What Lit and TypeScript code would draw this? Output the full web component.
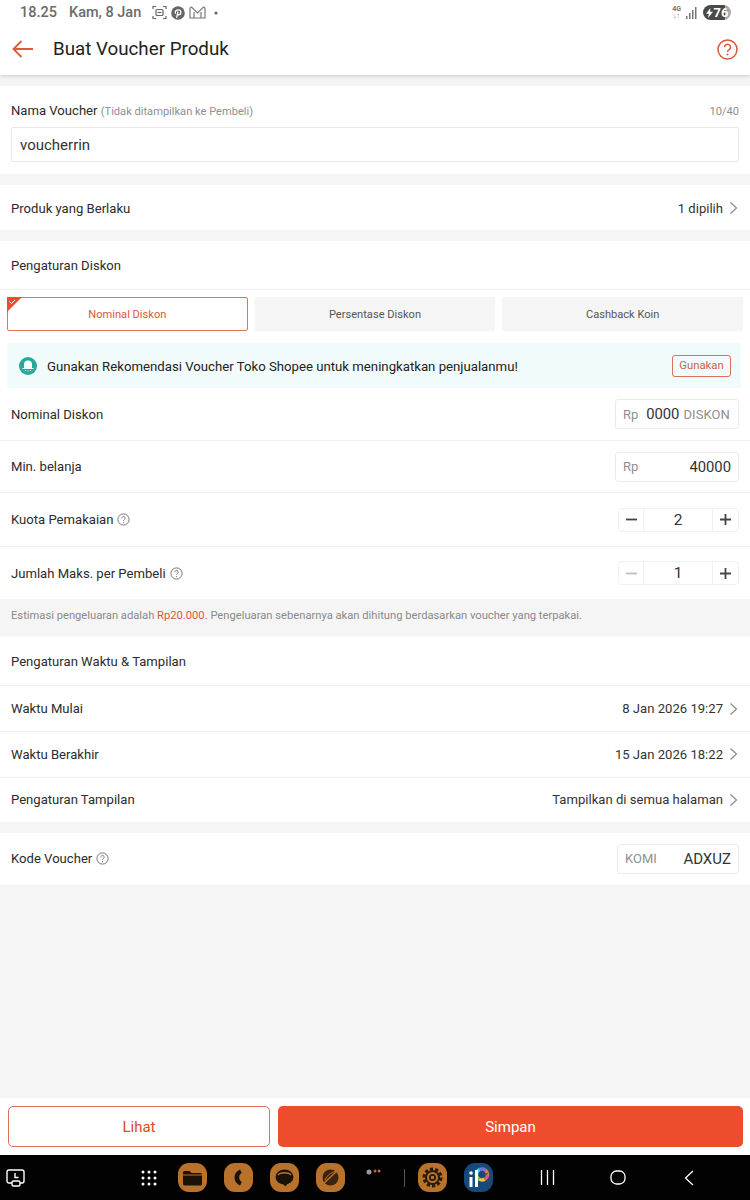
import { LitElement, html, css, svg } from 'lit';
import { customElement } from 'lit/decorators.js';

const chevron = html`<svg class="chev" width="9" height="14" viewBox="0 0 9 14"><path d="M1.5 1.5 7.5 7l-6 5.5" fill="none" stroke="#8a8a8a" stroke-width="1.2"/></svg>`;

const help = html`<svg class="help" width="13" height="13" viewBox="0 0 13 13">
  <circle cx="6.5" cy="6.5" r="5.6" fill="none" stroke="#777" stroke-width="1"/>
  <path d="M4.8 5.2a1.7 1.7 0 1 1 2.6 1.4c-.6.4-.9.7-.9 1.3" fill="none" stroke="#777" stroke-width="1"/>
  <circle cx="6.5" cy="9.6" r=".7" fill="#777"/>
</svg>`;

const dockIcon = (inner: unknown) => html`<svg class="dock-icon" width="29" height="29" viewBox="0 0 29 29">
  <rect width="29" height="29" rx="11" fill="#b8722c"/>${inner}
</svg>`;

const wheelColors = ['#e0567a', '#e8c34a', '#7ac74f', '#4fc3e0', '#7a6fe0', '#e0803a'];

/**
 * Voucher form page
 */
@customElement('app-root')
export class AppRoot extends LitElement {
  static styles = css`
    :host {
      display: block;
      width: 750px;
      height: 1200px;
      overflow: hidden;
    }

    .page {
      display: flex;
      flex-direction: column;
      height: 1200px;
      background: #f5f5f5;
      font-family: Roboto, "Liberation Sans", sans-serif;
      font-size: 13.1px;
      color: #2b2b2b;
    }

    .top {
      height: 75px;
      flex: none;
      background: #fff;
      box-shadow: 0 1px 4px rgba(0, 0, 0, .18);
      position: relative;
    }

    .status {
      height: 24px;
      box-sizing: border-box;
      padding: 1px 19px 0 20px;
      display: flex;
      align-items: center;
      color: #6b6b6b;
      font-weight: 500;
      font-size: 14.5px;
    }

    .status .time {
      margin-right: 12px;
    }

    .status .date {
      margin-right: 11px;
    }

    .status .icons {
      display: flex;
      align-items: center;
      gap: 4px;
    }

    .status .right {
      margin-left: auto;
      display: flex;
      align-items: center;
      gap: 5px;
    }

    .battery {
      width: 28px;
      height: 15px;
      border-radius: 8px;
      background: linear-gradient(90deg, #4a4a4a 78%, #a8a8a8 78%);
      color: #fff;
      font-size: 13px;
      font-weight: 700;
      display: flex;
      align-items: center;
      justify-content: center;
      gap: 1px;
      line-height: 15px;
    }

    .net {
      font-size: 7px;
      line-height: 7px;
      color: #777;
      text-align: center;
      font-weight: 700;
    }

    .bar {
      height: 50px;
      display: flex;
      align-items: center;
      padding: 0 12px;
    }

    .bar h1 {
      font-size: 18.75px;
      font-weight: 400;
      margin: 0 0 0 20px;
      color: #222;
      flex: 1;
    }

    .card {
      background: #fff;
      margin-top: 11px;
    }

    .name {
      height: 88px;
      box-sizing: border-box;
      padding: 16px 11px 0;
    }

    .name-head {
      display: flex;
      align-items: baseline;
      justify-content: space-between;
      margin-bottom: 7px;
      line-height: 17px;
    }

    .sub {
      font-size: 11.1px;
      color: #8f8f8f;
    }

    .name-input {
      height: 35px;
      box-sizing: border-box;
      border: 1px solid #e8e8e8;
      border-radius: 2px;
      padding: 0 8px;
      display: flex;
      align-items: center;
      font-size: 15px;
      color: #333;
    }

    .row {
      display: flex;
      align-items: center;
      justify-content: space-between;
      padding: 0 11px;
    }

    .row + .row {
      border-top: 1px solid #eeeeee;
    }

    .link-row {
      height: 45px;
      box-sizing: border-box;
      padding-top: 1px;
    }

    .value {
      display: flex;
      align-items: center;
      gap: 6px;
      color: #333;
    }

    .chev {
      margin-right: 1px;
    }

    .section-head {
      height: 49px;
      box-sizing: border-box;
      display: flex;
      align-items: center;
      padding: 1px 11px 0;
      border-bottom: 1px solid #eeeeee;
    }

    .tabs {
      display: grid;
      grid-template-columns: repeat(3, 1fr);
      gap: 7px;
      padding: 7px 7px 12px;
    }

    .tab {
      position: relative;
      height: 34px;
      box-sizing: border-box;
      padding-top: 1px;
      background: #f5f5f5;
      border-radius: 2px;
      display: flex;
      align-items: center;
      justify-content: center;
      font-size: 11.1px;
      color: #555;
    }

    .tab.active {
      background: #fff;
      border: 1.5px solid #e0725a;
      color: #d9573c;
    }

    .tab .tick {
      position: absolute;
      left: -1.5px;
      top: -1.5px;
    }

    .banner {
      height: 45px;
      margin: 0 9px 0 7px;
      padding: 0 10px 0 12px;
      background: #f1fbfb;
      display: flex;
      align-items: center;
      gap: 10px;
      font-size: 13.2px;
      color: #222;
    }

    .banner span {
      flex: 1;
      padding-top: 1px;
    }

    .use-btn {
      width: 59px;
      height: 22px;
      box-sizing: border-box;
      border: 1px solid #d9705a;
      border-radius: 3px;
      display: flex;
      align-items: center;
      justify-content: center;
      color: #cf5f48;
      font-size: 11.3px;
    }

    .field-row {
      height: 52px;
      box-sizing: border-box;
    }

    .field-row.tall {
      height: 53.5px;
      padding-top: 1px;
    }

    .label {
      display: flex;
      align-items: center;
      gap: 4px;
    }

    .money {
      width: 124px;
      height: 30px;
      box-sizing: border-box;
      border: 1px solid #ebebeb;
      border-radius: 3px;
      padding: 0 7px;
      display: flex;
      align-items: center;
      justify-content: space-between;
      font-size: 14.8px;
      color: #333;
    }

    .money .pre,
    .money .post {
      color: #8f8f8f;
      font-size: 13px;
    }

    .money .num {
      margin-left: auto;
    }

    .money .post {
      margin-left: 4px;
      margin-right: 1px;
      letter-spacing: .1px;
    }

    .stepper {
      width: 121px;
      height: 24px;
      box-sizing: border-box;
      border: 1px solid #f0f0f0;
      border-radius: 4px;
      display: grid;
      grid-template-columns: 24px 1fr 25px;
      font-size: 15.5px;
      color: #333;
    }

    .stepper > * {
      display: flex;
      align-items: center;
      justify-content: center;
    }

    .stepper .mid {
      border-left: 1px solid #f0f0f0;
      border-right: 1px solid #f0f0f0;
    }

    .note {
      height: 38px;
      box-sizing: border-box;
      padding: 0 11px 5px;
      display: flex;
      align-items: center;
      font-size: 11.2px;
      color: #8a8a8a;
    }

    .note b {
      font-weight: 400;
      color: #d9573c;
    }

    .flat {
      margin-top: 0;
    }

    .time-row {
      height: 45.3px;
      box-sizing: border-box;
    }

    .kode {
      height: 52px;
    }

    .kode .money {
      width: 122px;
    }

    .kode .num {
      font-size: 15px;
    }

    .spacer {
      flex: 1;
    }

    .actions {
      height: 57px;
      flex: none;
      box-sizing: border-box;
      background: #fff;
      padding: 8px 7px 8px 8px;
      display: flex;
      gap: 8px;
    }

    .btn {
      height: 41px;
      box-sizing: border-box;
      border-radius: 5px;
      display: flex;
      align-items: center;
      justify-content: center;
      font-size: 15px;
    }

    .btn.ghost {
      width: 262px;
      border: 1px solid #d9705a;
      color: #e0492a;
    }

    .btn.solid {
      flex: 1;
      background: #ee4d2d;
      color: #fff;
    }

    .dock {
      height: 45px;
      flex: none;
      background: #020202;
      display: flex;
      align-items: center;
    }

    .dock svg {
      flex: none;
    }

    .dock .recent {
      margin-left: 6px;
      margin-right: 115px;
    }

    .dock .grid {
      margin-right: 21px;
    }

    .dock .dock-icon {
      margin-right: 17px;
    }

    .dock .mini {
      margin-left: 4px;
      margin-bottom: 12px;
      margin-right: 23px;
    }

    .dock .sep {
      width: 1px;
      height: 18px;
      background: #555;
      margin-right: 13px;
    }

    .dock .nav {
      margin-left: 47px;
      display: flex;
      align-items: center;
    }

    .dock .nav .home {
      margin: 0 58px 0 55px;
    }
  `;

  render() {
    return html`
      <div class="page">
        <div class="top">
          <div class="status">
            <span class="time">18.25</span>
            <span class="date">Kam, 8 Jan</span>
            <span class="icons">
              <svg width="15" height="15" viewBox="0 0 15 15" fill="none" stroke="#666" stroke-width="1.2">
                <path d="M1 4V1.5h3M11 1.5h3V4M1 11v2.5h3M11 13.500h3V11"/>
                <rect x="4" y="4.5" width="7" height="6" rx="1"/>
                <path d="M5.5 7.5h4"/>
              </svg>
              <svg width="14" height="14" viewBox="0 0 14 14">
                <circle cx="7" cy="7" r="6.8" fill="#666"/>
                <path d="M5.6 11.8 7 5.6M4.6 7.6c-1-2 .6-3.8 2.6-3.8s3 1.4 2.6 3.2-2.4 2.4-3.2 1.2" fill="none" stroke="#fff" stroke-width="1.3"/>
              </svg>
              <svg width="17" height="13" viewBox="0 0 17 13" fill="none" stroke="#777" stroke-width="1.2">
                <path d="M1 12V2.500Q1 1 2.500 1L8.500 7l6-6Q16 1 16 2.500V12H1zM5 12V6M12 12V6"/>
              </svg>
              <svg width="10" height="10" viewBox="0 0 10 10" style="margin-left:1px"><circle cx="5" cy="5" r="1.6" fill="#666"/></svg>
            </span>
            <span class="right">
              <span class="net">4G<br />↓↑</span>
              <svg width="12" height="13" viewBox="0 0 12 13" fill="#777">
                <rect x="0" y="10" width="1.5" height="3"/>
                <rect x="3" y="7" width="1.5" height="6"/>
                <rect x="6" y="4" width="1.5" height="9"/>
                <rect x="9" y="1" width="1.5" height="12"/>
              </svg>
              <span class="battery">
                <svg width="7" height="10" viewBox="0 0 7 10"><path d="M4.5 0 0 5.8h2.8L2 10l5-6.2H4z" fill="#fff"/></svg>76
              </span>
            </span>
          </div>
          <div class="bar">
            <svg width="21" height="18" viewBox="0 0 21 18" fill="none" stroke="#e0583c" stroke-width="1.8">
              <path d="M21 9H1.5M9.5 1 1.5 9l8 8"/>
            </svg>
            <h1>Buat Voucher Produk</h1>
            <svg width="21" height="21" viewBox="0 0 21 21">
              <circle cx="10.5" cy="10.5" r="9.5" fill="none" stroke="#d9573c" stroke-width="1.5"/>
              <path d="M7.5 8.2a3 3 0 1 1 4.700 2.500c-1.100.7-1.700 1.300-1.700 2.400" fill="none" stroke="#d9573c" stroke-width="1.5"/>
              <circle cx="10.5" cy="15.6" r="1" fill="#d9573c"/>
            </svg>
          </div>
        </div>

        <div class="card name">
          <div class="name-head">
            <span>Nama Voucher <span class="sub">(Tidak ditampilkan ke Pembeli)</span></span>
            <span class="sub">10/40</span>
          </div>
          <div class="name-input">voucherrin</div>
        </div>

        <div class="card row link-row">
          <span>Produk yang Berlaku</span>
          <span class="value">1 dipilih ${chevron}</span>
        </div>

        <div class="card">
          <div class="section-head">Pengaturan Diskon</div>
          <div class="tabs">
            <div class="tab active">
              <svg class="tick" width="15" height="15" viewBox="0 0 15 15">
                <path d="M0 0h15L0 15z" fill="#ee4d2d"/>
                <path d="M2.5 4.500 4.500 6.500 8 3" fill="none" stroke="#fff" stroke-width="1"/>
              </svg>
              Nominal Diskon
            </div>
            <div class="tab">Persentase Diskon</div>
            <div class="tab">Cashback Koin</div>
          </div>
          <div class="banner">
            <svg width="18" height="18" viewBox="0 0 18 18">
              <circle cx="9" cy="9" r="9" fill="#26aa99"/>
              <path d="M5 11V7.500a4 4 0 0 1 8 0V11z" fill="#fff"/>
              <path d="M3.5 11.500h11" stroke="#fff" stroke-width="1"/>
              <path d="M6 13.500h1M8.500 14h1M11 13.500h1" stroke="#fff" stroke-width="1"/>
            </svg>
            <span>Gunakan Rekomendasi Voucher Toko Shopee untuk meningkatkan penjualanmu!</span>
            <div class="use-btn">Gunakan</div>
          </div>
          <div class="row field-row">
            <span>Nominal Diskon</span>
            <div class="money"><span class="pre">Rp</span><span class="num">0000</span><span class="post">DISKON</span></div>
          </div>
          <div class="row field-row">
            <span>Min. belanja</span>
            <div class="money"><span class="pre">Rp</span><span class="num">40000</span></div>
          </div>
          <div class="row field-row tall">
            <span class="label">Kuota Pemakaian ${help}</span>
            ${this.renderStepper('2', '#444')}
          </div>
          <div class="row field-row tall">
            <span class="label">Jumlah Maks. per Pembeli ${help}</span>
            ${this.renderStepper('1', '#bdbdbd')}
          </div>
        </div>

        <div class="note">
          <span>Estimasi pengeluaran adalah <b>Rp20.000.</b> Pengeluaran sebenarnya akan dihitung berdasarkan voucher yang terpakai.</span>
        </div>

        <div class="card flat">
          <div class="section-head">Pengaturan Waktu &amp; Tampilan</div>
          <div class="row time-row">
            <span>Waktu Mulai</span>
            <span class="value">8 Jan 2026 19:27 ${chevron}</span>
          </div>
          <div class="row time-row">
            <span>Waktu Berakhir</span>
            <span class="value">15 Jan 2026 18:22 ${chevron}</span>
          </div>
          <div class="row time-row">
            <span>Pengaturan Tampilan</span>
            <span class="value">Tampilkan di semua halaman ${chevron}</span>
          </div>
        </div>

        <div class="card row kode">
          <span class="label">Kode Voucher ${help}</span>
          <div class="money"><span class="pre">KOMI</span><span class="num">ADXUZ</span></div>
        </div>

        <div class="spacer"></div>

        <div class="actions">
          <div class="btn ghost">Lihat</div>
          <div class="btn solid">Simpan</div>
        </div>

        ${this.renderDock()}
      </div>
    `;
  }

  renderStepper(value: string, minus: string) {
    return html`
      <div class="stepper">
        <span><svg width="11" height="11" viewBox="0 0 11 11"><path d="M0 5.5h11" stroke=${minus} stroke-width="1.8"/></svg></span>
        <span class="mid">${value}</span>
        <span><svg width="11" height="11" viewBox="0 0 11 11"><path d="M0 5.5h11M5.5 0v11" stroke="#444" stroke-width="1.8"/></svg></span>
      </div>
    `;
  }

  renderDock() {
    return html`
      <div class="dock">
        <svg class="recent" width="20" height="20" viewBox="0 0 20 20" fill="none" stroke="#fff" stroke-width="1.4">
          <path d="M6 15H3a2 2 0 0 1-2-2V4a2 2 0 0 1 2-2h13a2 2 0 0 1 2 2v9a2 2 0 0 1-2 2h-2"/>
          <rect x="6" y="13" width="8" height="5" rx="1.5"/>
          <path d="M9 5v4.500h3.500"/>
        </svg>
        <svg class="grid" width="16" height="16" viewBox="0 0 16 16" fill="#fff">
          ${[2, 8, 14].flatMap((y) => [2, 8, 14].map((x) => svg`<circle cx=${x} cy=${y} r="1.5"/>`))}
        </svg>
        ${dockIcon(svg`<path d="M5 9.500q0-1.500 1.500-1.500h5l2 2h9q1.500 0 1.500 1.500V21q0 1.500-1.500 1.500h-16Q5 22.500 5 21z" fill="#1a1208"/><path d="M5 12h19" stroke="#b8722c" stroke-width="1"/>`)}
        ${dockIcon(svg`<path d="M16 6.500c-3.500 1.500-5.500 4.500-5.500 8s2 6.500 5.500 8l1.800-3.600c-1.800-.9-2.600-2.500-2.600-4.400s.8-3.500 2.600-4.400z" fill="#1a1208"/>`)}
        ${dockIcon(svg`<ellipse cx="14.5" cy="14" rx="9" ry="7.5" fill="#1a1208"/><path d="M11 19l4.500 4.500 3-4.500z" fill="#1a1208"/><path d="M8 12c2-3 11-3 13 0" fill="none" stroke="#b8722c" stroke-width="1.5"/>`)}
        ${dockIcon(svg`<circle cx="14.5" cy="14.5" r="8" fill="#3a2410"/><path d="M6 22 23 6" stroke="#b8722c" stroke-width="1.5"/><path d="M9 17C12 11 16 9 21 8" fill="none" stroke="#b8722c" stroke-width="1"/>`)}
        <svg class="mini" width="15" height="8" viewBox="0 0 15 8">
          <circle cx="3" cy="4" r="2.5" fill="#9a9a9a"/>
          <circle cx="9" cy="3" r="1.5" fill="#d9573c"/>
          <circle cx="13" cy="3" r="1.5" fill="#b8722c"/>
        </svg>
        <span class="sep"></span>
        ${dockIcon(svg`<circle cx="14.5" cy="14.5" r="8" fill="none" stroke="#2a1c0c" stroke-width="4" stroke-dasharray="3 2"/><circle cx="14.5" cy="14.5" r="7.5" fill="#2a1c0c"/><circle cx="14.5" cy="14.5" r="4.5" fill="none" stroke="#b8722c" stroke-width="2"/><rect x="13" y="13" width="3" height="3" fill="#b8722c"/>`)}
        <svg width="29" height="29" viewBox="0 0 29 29">
          <rect width="29" height="29" rx="11" fill="#17497a"/>
          ${wheelColors.map((color, i) => svg`<circle cx="18" cy="11.5" r="5.5" fill="none" stroke=${color} stroke-width="3.5" stroke-dasharray="5.76 28.8" stroke-dashoffset=${-i * 5.76}/>`)}
          <path d="M7 14v10M12.5 24V7" stroke="#fff" stroke-width="3"/>
          <circle cx="7" cy="10" r="1.8" fill="#fff"/>
        </svg>
        <div class="nav">
          <svg width="15" height="15" viewBox="0 0 15 15" stroke="#fff" stroke-width="1.3"><path d="M1.5 0v15M7.5 0v15M13.5 0v15"/></svg>
          <svg class="home" width="16" height="15" viewBox="0 0 16 15" fill="none" stroke="#fff" stroke-width="1.3"><rect x="1" y="1" width="14" height="13" rx="5.5"/></svg>
          <svg width="10" height="16" viewBox="0 0 10 16" fill="none" stroke="#fff" stroke-width="1.3"><path d="M9 1 1.5 8 9 15"/></svg>
        </div>
      </div>
    `;
  }
}
